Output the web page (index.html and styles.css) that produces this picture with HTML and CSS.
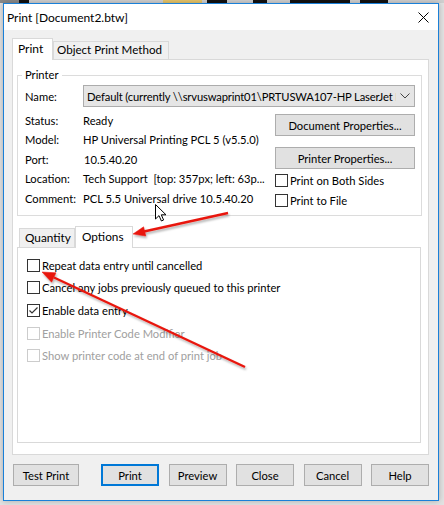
FILE: index.html
```html
<!DOCTYPE html>
<html lang="en">
<head>
  <meta charset="UTF-8">
  <meta name="viewport" content="width=device-width, initial-scale=1.0">
  <title>Print [Document2.btw]</title>
  <link rel="stylesheet" href="styles.css">
</head>
<body>
  <div class="window">
    <div class="titlebar">
      <span class="title">Print [Document2.btw]</span>
      <svg class="close" width="11" height="11" viewBox="0 0 11 11">
        <path d="M0.5 0.5 L10.5 10.5 M10.5 0.5 L0.5 10.5" stroke="#000" stroke-width="1" fill="none"/>
      </svg>
    </div>

    <div class="client">
      <div class="tabs">
        <div class="tab active tab-print">Print</div>
        <div class="tab tab-method">Object Print Method</div>
      </div>

      <div class="tab-panel">
        <fieldset class="printer-group">
          <legend>Printer</legend>

          <div class="name-row">
            <span class="lbl">Name:</span>
            <div class="select">
              <span class="select-text">Default (currently \\srvuswaprint01\PRTUSWA107-HP LaserJet Pro</span>
              <svg class="chevron" width="10" height="6" viewBox="0 0 10 6">
                <path d="M0.5 0.5 L5 5 L9.5 0.5" stroke="#444" stroke-width="1" fill="none"/>
              </svg>
            </div>
          </div>

          <div class="details">
            <div class="info">
              <div class="row"><span class="lbl">Status:</span><span>Ready</span></div>
              <div class="row"><span class="lbl">Model:</span><span>HP Universal Printing PCL 5 (v5.5.0)</span></div>
              <div class="row"><span class="lbl">Port:</span><span class="port">10.5.40.20</span></div>
              <div class="row"><span class="lbl">Location:</span><span>Tech Support&nbsp; [top: 357px; left: 63p...</span></div>
              <div class="row"><span class="lbl">Comment:</span><span>PCL 5.5 Universal drive 10.5.40.20</span></div>
            </div>
            <div class="side">
              <button class="btn wide">Document Properties...</button>
              <button class="btn wide second">Printer Properties...</button>
              <label class="check side-check"><span class="box"></span>Print on Both Sides</label>
              <label class="check side-check"><span class="box"></span>Print to File</label>
            </div>
          </div>
        </fieldset>

        <div class="subtabs">
          <div class="tab tab-qty">Quantity</div>
          <div class="tab active tab-opts">Options</div>
        </div>

        <div class="options-panel">
          <label class="check opt"><span class="box"></span>Repeat data entry until cancelled</label>
          <label class="check opt"><span class="box"></span>Cancel any jobs previously queued to this printer</label>
          <label class="check opt">
            <span class="box">
              <svg width="11" height="11" viewBox="0 0 11 11">
                <path d="M1.5 5.5 L4 8 L9.5 2.5" stroke="#333" stroke-width="1.2" fill="none"/>
              </svg>
            </span>Enable data entry
          </label>
          <label class="check opt disabled"><span class="box"></span>Enable Printer Code Modifier</label>
          <label class="check opt disabled"><span class="box"></span>Show printer code at end of print job</label>
        </div>
      </div>

      <div class="actions">
        <button class="btn test">Test Print</button>
        <button class="btn focused">Print</button>
        <button class="btn">Preview</button>
        <button class="btn">Close</button>
        <button class="btn">Cancel</button>
        <button class="btn">Help</button>
      </div>
    </div>
  </div>

  <!-- annotation layer: arrows and mouse pointer drawn over the dialog -->
  <svg class="marks" width="444" height="505" viewBox="0 0 444 505">
    <defs>
      <filter id="shade" x="-10%" y="-10%" width="120%" height="130%">
        <feDropShadow dx="1" dy="2" stdDeviation="1.2" flood-color="#000" flood-opacity="0.3"/>
      </filter>
    </defs>
    <g filter="url(#shade)" fill="#e8170f" stroke="#e8170f">
      <line x1="228" y1="213" x2="144" y2="231.5" stroke-width="2.4"/>
      <polygon points="133,234 145.8,236 143.6,226.8" stroke-width="0.5"/>
      <line x1="245" y1="367" x2="54" y2="277.5" stroke-width="2.4"/>
      <polygon points="42,272 56,272.8 51.6,282.2" stroke-width="0.5"/>
    </g>
    <path d="M155.5 204.5 V219 L159 215.6 L161.4 221 L163.6 220 L161.3 214.8 H166 Z"
          fill="#fff" stroke="#000" stroke-width="1" stroke-linejoin="round"/>
  </svg>
</body>
</html>
```

FILE: styles.css
```css
* {
  box-sizing: border-box;
}

body {
  margin: 0;
  width: 444px;
  height: 505px;
  overflow: hidden;
  position: relative;
  font-family: 'Lato', 'Liberation Sans', sans-serif;
  font-size: 11.2px;
  color: #000;
  background:
    linear-gradient(to right, #8a8a8a 0 19px, #111 19px 29px, #d0d0d0 29px 163px,
      #e6c56a 163px 202px, #d0d0d0 202px 207px, #111 207px 227px, #d0d0d0 227px 253px,
      #111 253px 267px, #d0d0d0 267px 290px, #111 290px 350px, #d0d0d0 350px 360px,
      #111 360px 388px, #d0d0d0 388px) top left / 100% 3px no-repeat,
    #e2e2e2;
}

.window {
  margin: 3px 0 0 3px;
  width: 436px;
  height: 498px;
  border: 1px solid #1a80d8;
  background: #f0f0f0;
  box-shadow: 0 0 6px rgba(0, 0, 0, 0.25);
  display: flex;
  flex-direction: column;
}

.titlebar {
  height: 26px;
  background: #fff;
  display: flex;
  align-items: center;
  padding-left: 3px;
  font-size: 12px;
}

.close {
  margin-left: auto;
  margin-right: 9px;
}

.client {
  flex: 1;
  padding: 8px 9px 0 8px;
}

/* tab strips */
.tabs,
.subtabs {
  display: flex;
  align-items: flex-end;
}

.tab {
  border: 1px solid #d9d9d9;
  border-bottom: 0;
  background: #f0f0f0;
  white-space: nowrap;
}

.tab.active {
  background: #fff;
  position: relative;
  z-index: 1;
  margin-bottom: -1px;
}

.tab-print {
  width: 41px;
  height: 22px;
  padding-left: 5px;
  line-height: 20px;
  font-size: 12px;
}

.tab-method {
  width: 116px;
  height: 18px;
  padding-left: 3px;
  line-height: 16px;
  font-size: 11.6px;
}

.tab-panel {
  width: 417px;
  background: #fff;
  border: 1px solid #d9d9d9;
  padding: 0 6px 11px 4px;
}

/* printer group */
.printer-group {
  margin: 8px 0 0;
  padding: 3px 6px 7px 7px;
  border: 1px solid #dcdcdc;
  min-width: 0;
}

.printer-group legend {
  padding: 0 3px;
  margin-left: -3px;
  line-height: 14px;
}

.lbl {
  width: 58px;
  flex-shrink: 0;
}

.name-row {
  display: flex;
  align-items: center;
  height: 22px;
}

.select {
  width: 332px;
  height: 22px;
  display: flex;
  align-items: center;
  background: #e5e5e5;
  border: 1px solid #acacac;
  padding-left: 3px;
}

.select-text {
  width: 309px;
  overflow: hidden;
  white-space: nowrap;
  letter-spacing: -0.15px;
}

.chevron {
  margin-left: auto;
  margin-right: 4px;
}

.details {
  display: grid;
  grid-template-columns: 250px 1fr;
}

.info {
  padding-top: 4px;
}

.row {
  display: flex;
  line-height: 19.4px;
  white-space: nowrap;
}

.port {
  padding-left: 1px;
}

.side {
  padding-top: 7px;
  display: flex;
  flex-direction: column;
}

/* push buttons */
.btn {
  height: 22px;
  padding: 0;
  font: inherit;
  color: inherit;
  background: #e1e1e1;
  border: 1px solid #adadad;
  text-align: center;
}

.btn.wide {
  width: 140px;
}

.btn.second {
  margin-top: 11px;
}

.btn.focused {
  border: 2px solid #0078d7;
}

/* check boxes */
.check {
  display: flex;
  align-items: center;
  white-space: nowrap;
}

.box {
  width: 13px;
  height: 13px;
  margin-right: 2px;
  border: 1px solid #333;
  background: #fff;
  flex-shrink: 0;
  display: flex;
  align-items: center;
  justify-content: center;
}

.side-check {
  height: 13px;
  margin-top: 7px;
}

.side .btn.second + .side-check {
  margin-top: 5px;
}

.check.disabled {
  color: #a0a0a0;
}

.check.disabled .box {
  border-color: #cccccc;
}

/* options sub tab */
.subtabs {
  margin: 10px 0 0 2px;
  font-size: 11.8px;
}

.tab-qty {
  width: 56px;
  height: 19px;
  padding-left: 5px;
  line-height: 18px;
}

.tab-opts {
  width: 58px;
  height: 22px;
  padding-left: 6px;
  line-height: 19px;
}

.options-panel {
  width: 404px;
  height: 196px;
  border: 1px solid #d9d9d9;
  padding: 6px 0 0 9px;
}

.opt {
  height: 22.6px;
}

/* dialog buttons */
.actions {
  display: flex;
  margin-top: 9px;
  padding-left: 1px;
}

.actions .btn {
  width: 58px;
  margin-left: 9.5px;
}

.actions .btn.test {
  width: 66px;
  margin-left: 0;
}

.actions .btn.focused {
  margin-left: 22px;
}

.marks {
  position: absolute;
  left: 0;
  top: 0;
  pointer-events: none;
}
```
